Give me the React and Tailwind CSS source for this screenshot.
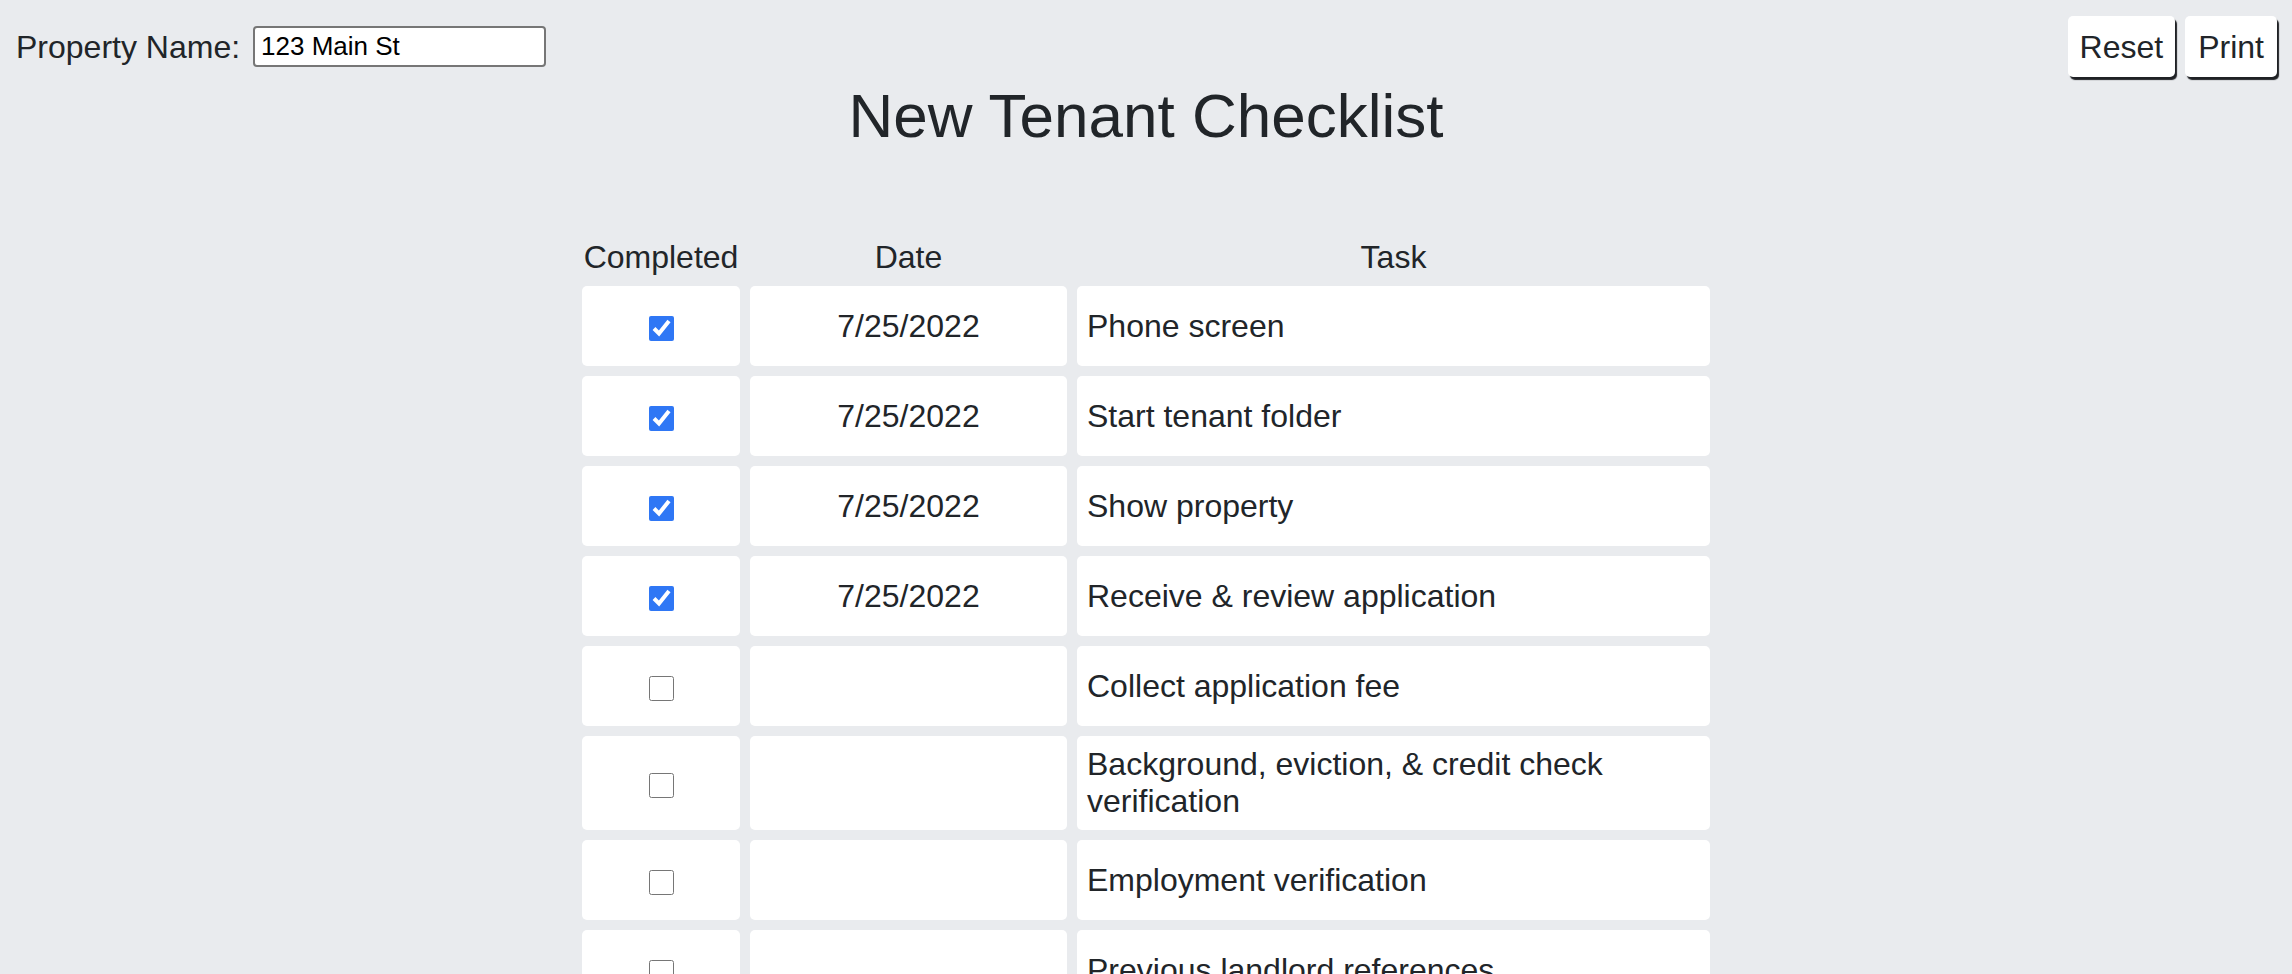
import { useState } from "react";

const initialTasks = [
  { task: "Phone screen", done: true, date: "7/25/2022" },
  { task: "Start tenant folder", done: true, date: "7/25/2022" },
  { task: "Show property", done: true, date: "7/25/2022" },
  { task: "Receive & review application", done: true, date: "7/25/2022" },
  { task: "Collect application fee", done: false, date: "" },
  { task: "Background, eviction, & credit check verification", done: false, date: "" },
  { task: "Employment verification", done: false, date: "" },
  { task: "Previous landlord references", done: false, date: "" },
  { task: "Approve or deny application", done: false, date: "" },
  { task: "Collect security deposit", done: false, date: "" },
  { task: "Sign lease", done: false, date: "" },
  { task: "Move-in inspection", done: false, date: "" },
  { task: "Hand over keys", done: false, date: "" },
];

export default function App() {
  const [propertyName, setPropertyName] = useState("123 Main St");
  const [tasks, setTasks] = useState(initialTasks);

  function toggle(i) {
    setTasks(
      tasks.map((t, idx) =>
        idx === i
          ? { ...t, done: !t.done, date: !t.done ? new Date().toLocaleDateString("en-US") : "" }
          : t
      )
    );
  }

  return (
    <div className="min-h-screen bg-[#e9ebee] text-[#212529] font-['Liberation_Sans',Arial,sans-serif] text-[32px]">
      <div className="flex items-center justify-between pl-[16px] pr-[15px] pt-[16px]">
        <div className="flex items-center">
          <label className="mr-[13px]">Property Name:</label>
          <input
            className="w-[293px] h-[41px] bg-white border-2 border-[#767676] rounded-[4px] px-[6px] text-[26px] text-black font-['Liberation_Sans',Arial,sans-serif]"
            value={propertyName}
            onChange={(e) => setPropertyName(e.target.value)}
          />
        </div>
        <div className="flex gap-[10px]">
          <button
            className="bg-white rounded-[5px] px-[12px] h-[61px] shadow-[2px_3px_1px_rgba(20,22,25,0.95)]"
            onClick={() => setTasks(initialTasks.map((t) => ({ ...t, done: false, date: "" })))}
          >
            Reset
          </button>
          <button
            className="bg-white rounded-[5px] px-[13px] h-[61px] shadow-[2px_3px_1px_rgba(20,22,25,0.95)]"
            onClick={() => window.print()}
          >
            Print
          </button>
        </div>
      </div>

      <h1 className="text-center text-[62px] leading-[70px] mt-[4px]">New Tenant Checklist</h1>

      <table className="mx-auto mt-[78px] border-separate border-spacing-[10px]">
        <thead>
          <tr>
            <th className="font-normal w-[158px] leading-[37px]">Completed</th>
            <th className="font-normal w-[317px] leading-[37px]">Date</th>
            <th className="font-normal w-[633px] leading-[37px]">Task</th>
          </tr>
        </thead>
        <tbody>
          {tasks.map((t, i) => (
            <tr key={t.task}>
              <td className="bg-white rounded-[5px] h-[80px] text-center align-middle">
                <input
                  type="checkbox"
                  className="w-[25px] h-[25px] accent-[#2f77f5] align-middle"
                  checked={t.done}
                  onChange={() => toggle(i)}
                />
              </td>
              <td className="bg-white rounded-[5px] h-[80px] text-center align-middle leading-[37px]">
                {t.date}
              </td>
              <td className="bg-white rounded-[5px] h-[80px] px-[10px] py-[10px] align-middle leading-[37px]">
                {t.task}
              </td>
            </tr>
          ))}
        </tbody>
      </table>
    </div>
  );
}
